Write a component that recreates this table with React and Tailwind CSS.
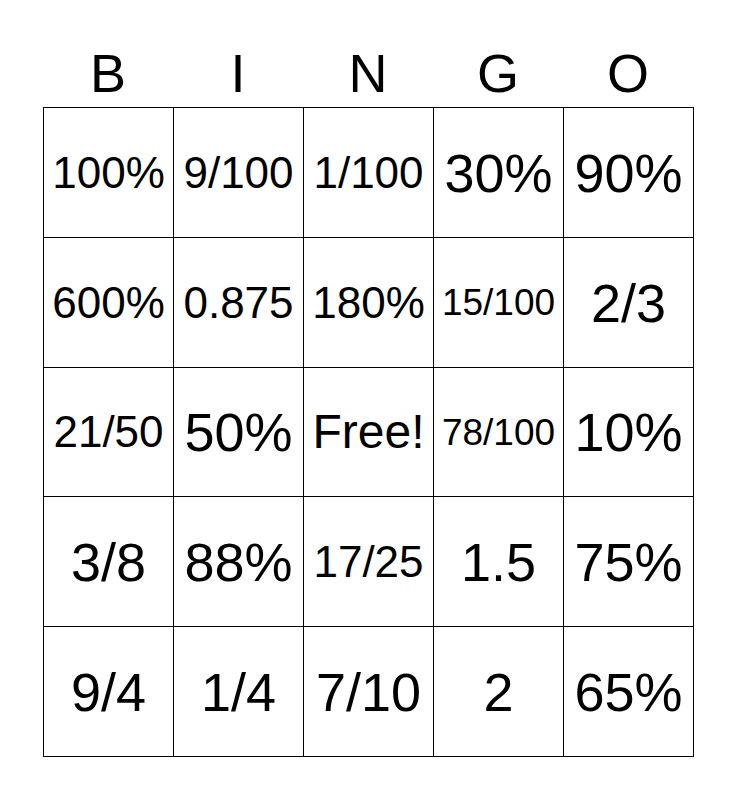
import React from "react";

const header = ["B", "I", "N", "G", "O"];

const cells = [
  [["100%", "text-[44px]"], ["9/100", "text-[44px]"], ["1/100", "text-[44px]"], ["30%", "text-[54px]"], ["90%", "text-[54px]"]],
  [["600%", "text-[44px]"], ["0.875", "text-[44px]"], ["180%", "text-[44px]"], ["15/100", "text-[37px]"], ["2/3", "text-[54px]"]],
  [["21/50", "text-[44px]"], ["50%", "text-[54px]"], ["Free!", "text-[48px]"], ["78/100", "text-[37px]"], ["10%", "text-[54px]"]],
  [["3/8", "text-[54px]"], ["88%", "text-[54px]"], ["17/25", "text-[44px]"], ["1.5", "text-[54px]"], ["75%", "text-[54px]"]],
  [["9/4", "text-[54px]"], ["1/4", "text-[54px]"], ["7/10", "text-[54px]"], ["2", "text-[54px]"], ["65%", "text-[54px]"]],
];

export default function App() {
  return (
    <div
      className="w-[736px] h-[800px] bg-white text-black"
      style={{ fontFamily: '"Liberation Sans", Arial, sans-serif' }}
    >
      <div className="pl-[43px]">
        <div className="grid grid-cols-[repeat(5,130px)] h-[107px]">
          {header.map((h) => (
            <div key={h} className="flex justify-center pt-[46px] text-[54px] leading-none">
              {h}
            </div>
          ))}
        </div>
        <div className="grid grid-cols-[repeat(5,130px)] w-[651px] border-l border-t border-black">
          {cells.flat().map(([t, size], i) => (
            <div
              key={i}
              className={`flex items-center justify-center h-[129.8px] pt-[1px] border-r border-b border-black leading-none whitespace-nowrap ${size}`}
            >
              {t}
            </div>
          ))}
        </div>
      </div>
    </div>
  );
}
